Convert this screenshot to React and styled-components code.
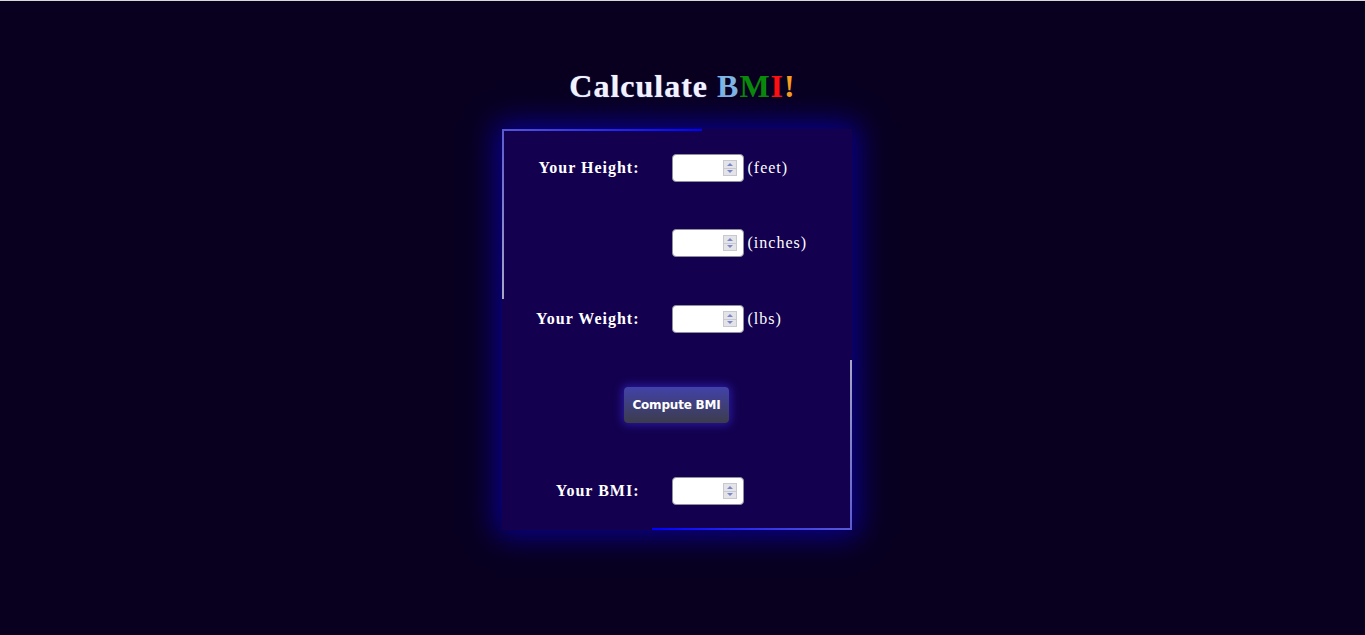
import React from "react";
import styled, { createGlobalStyle } from "styled-components";

const GlobalStyle = createGlobalStyle`
    html, body {
        margin: 0;
        padding: 0;
        background: #090020;
    }
    body {
        border-top: 1px solid #d8d8d8;
        min-height: 634px;
        font-family: "Liberation Serif", "Times New Roman", serif;
    }
`;

const Page = styled.div`
    display: flex;
    flex-direction: column;
    align-items: center;
    padding-top: 67px;
`;

const Title = styled.h1`
    margin: 0 0 25px;
    font-size: 32px;
    letter-spacing: 1px;
    font-weight: bold;
    color: #f4f4ff;
    text-shadow: 0 0 1px #9aa8e8;
    line-height: 36px;
`;

const Letter = styled.span`
    color: ${(p) => p.$color};
    text-shadow: none;
`;

const Panel = styled.div`
    position: relative;
    width: 350px;
    margin-right: 12px;
    box-sizing: border-box;
    padding: 25px 0 25px;
    background: #13004f;
    box-shadow: 0 0 28px 6px #0a0090;

    &::before, &::after {
        content: '';
        position: absolute;
        width: 200px;
        height: 170px;
        pointer-events: none;
    }
    &::before {
        top: 0;
        left: 0;
        background:
            linear-gradient(to right, #5656d6, #0000ff) top left / 100% 2px no-repeat,
            linear-gradient(to bottom, #5a5ad0, #a8a8c4) top left / 2px 100% no-repeat;
    }
    &::after {
        bottom: 0;
        right: 0;
        background:
            linear-gradient(to right, #0000ff, #5a5ad6) bottom right / 100% 2px no-repeat,
            linear-gradient(to bottom, #a8a8c4, #5a5ad0) bottom right / 2px 100% no-repeat;
    }
`;

const Row = styled.div`
    display: grid;
    grid-template-columns: 138px auto;
    column-gap: 32px;
    align-items: center;
    height: 28px;
    margin-bottom: ${(p) => p.$gap}px;
`;

const Label = styled.label`
    text-align: right;
    font-size: 16px;
    font-weight: bold;
    letter-spacing: 1px;
    color: #ffffff;
`;

const Field = styled.div`
    display: flex;
    align-items: center;
    gap: 4px;
    color: #ffffff;
    font-size: 16px;
    letter-spacing: 1px;
`;

const InputBox = styled.div`
    display: flex;
    align-items: center;
    width: 72px;
    height: 28px;
    box-sizing: border-box;
    background: #ffffff;
    border: 1px solid #8f8f9d;
    border-radius: 4px;
    padding: 0 6px 0 4px;
`;

const Input = styled.input`
    flex: 1;
    min-width: 0;
    border: none;
    outline: none;
    background: transparent;
    font-size: 13px;
    padding: 0;
`;

const Spinner = styled.div`
    display: flex;
    flex-direction: column;
    width: 14px;
    height: 16px;
    background: #e4e4e8;
    border: 1px solid #c8c8d0;
    box-sizing: border-box;
`;

const SpinHalf = styled.div`
    flex: 1;
    display: flex;
    align-items: center;
    justify-content: center;
    border-top: ${(p) => (p.$down ? "1px solid #c8c8d0" : "none")};
`;

const Arrow = styled.span`
    width: 0;
    height: 0;
    border-left: 3px solid transparent;
    border-right: 3px solid transparent;
    ${(p) => (p.$down ? "border-top: 3px solid #7a86c8;" : "border-bottom: 3px solid #7a86c8;")}
`;

const Center = styled.div`
    display: flex;
    justify-content: center;
    margin-bottom: 54px;
`;

const Button = styled.button`
    width: 105px;
    height: 36px;
    border: none;
    border-radius: 4px;
    background: linear-gradient(to bottom, #4242aa, #3c3c4c);
    color: #ffffff;
    font-family: "DejaVu Sans", Verdana, sans-serif;
    font-weight: bold;
    font-size: 12px;
    letter-spacing: -0.2px;
    box-shadow: 0 0 8px 2px #2a1aa0;
    cursor: pointer;
`;

function NumberInput() {
    return (
        <InputBox>
            <Input type="text" />
            <Spinner>
                <SpinHalf><Arrow /></SpinHalf>
                <SpinHalf $down><Arrow $down /></SpinHalf>
            </Spinner>
        </InputBox>
    );
}

export default function App() {
    return (
        <>
            <GlobalStyle />
            <Page>
                <Title>
                    Calculate <Letter $color="#7fb6e4">B</Letter>
                    <Letter $color="#0a8a0a">M</Letter>
                    <Letter $color="#ff1010">I</Letter>
                    <Letter $color="#f5a020">!</Letter>
                </Title>
                <Panel>
                    <Row $gap={47}>
                        <Label>Your Height:</Label>
                        <Field><NumberInput /> (feet)</Field>
                    </Row>
                    <Row $gap={48}>
                        <Label></Label>
                        <Field><NumberInput /> (inches)</Field>
                    </Row>
                    <Row $gap={54}>
                        <Label>Your Weight:</Label>
                        <Field><NumberInput /> (lbs)</Field>
                    </Row>
                    <Center>
                        <Button>Compute BMI</Button>
                    </Center>
                    <Row $gap={0}>
                        <Label>Your BMI:</Label>
                        <Field><NumberInput /></Field>
                    </Row>
                </Panel>
            </Page>
        </>
    );
}
